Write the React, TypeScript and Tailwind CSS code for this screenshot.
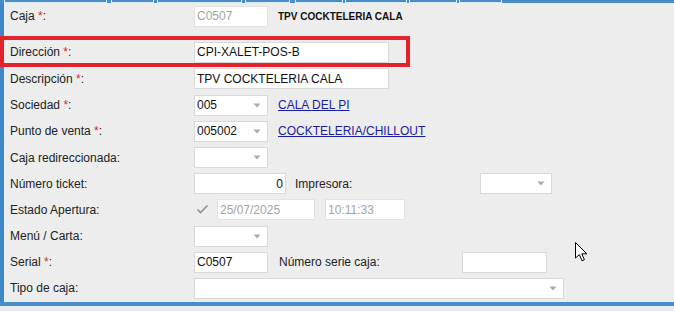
import React from 'react';

const tabs = [
  { w: 'w-[103px]', ml: 'ml-[4px]' },
  { w: 'w-[43px]', ml: 'ml-[4px]' },
  { w: 'w-[85px]', ml: 'ml-[3px]' },
  { w: 'w-[45px]', ml: 'ml-[3px]' },
  { w: 'w-[48px]', ml: 'ml-[5px]' },
  { w: 'w-[62px]', ml: 'ml-[2px]' },
  { w: 'w-[48px]', ml: 'ml-[2px]' },
  { w: 'w-[43px]', ml: 'ml-[2px]' },
];

function Label({ text, req, className = '' }: { text: string; req?: boolean; className?: string }) {
  return (
    <div className={`shrink-0 whitespace-nowrap ${className}`}>
      {text}
      {req && (
        <>
          {' '}
          <span className="text-[#d42a2a]">*</span>
        </>
      )}
      :
    </div>
  );
}

function Box({
  className,
  value,
  right,
  muted,
  arrow,
}: {
  className: string;
  value?: string;
  right?: boolean;
  muted?: boolean;
  arrow?: boolean;
}) {
  return (
    <div
      className={`h-[21px] shrink-0 bg-white border border-[#d9d9d9] flex items-center ${
        right ? 'justify-end pr-[2px]' : 'pl-[2px]'
      } ${muted ? 'text-[#a3a3a3]' : 'text-[#111]'} ${className}`}
    >
      {value && <span className={arrow ? 'flex-1' : ''}>{value}</span>}
      {arrow && (
        <div className="ml-auto pr-[6px] flex items-center">
          <svg width="8" height="5" viewBox="0 0 8 5">
            <path d="M0.5 0.5 L7.5 0.5 L4 4.5 Z" fill="#aaaaaa" />
          </svg>
        </div>
      )}
    </div>
  );
}

function Row({ h, children }: { h: string; children: React.ReactNode }) {
  return <div className={`flex items-center ${h}`}>{children}</div>;
}

export default function App() {
  return (
    <div className="relative w-[674px] h-[311px] overflow-hidden bg-[#ededed] text-[12px] text-[#222] font-[family-name:'Liberation_Sans',Arial,sans-serif]">
      {/* tab strip */}
      <div className="flex h-[3px] bg-[#4a8ec9]">
        {tabs.map((t, i) => (
          <div key={i} className={`h-[3px] ${t.w} ${t.ml} border-x border-b border-[#dcecf7]`} />
        ))}
      </div>

      <div className="flex">
        <div className="w-[4px] shrink-0 bg-[#3f87c6]" />
        <div className="flex-1 pl-[6px] pb-[1px]">
          <Row h="h-[26px]">
            <Label text="Caja" req className="w-[184px]" />
            <Box className="w-[74px] border-[#e2e2e2]" value="C0507" muted />
            <div className="ml-[10px] text-[10px] font-bold text-[#111]">TPV COCKTELERIA CALA</div>
          </Row>

          <div className="mt-[10px]">
            <Row h="h-[26px]">
              <Label text="Dirección" req className="w-[184px]" />
              <Box className="w-[195px]" value="CPI-XALET-POS-B" />
            </Row>
          </div>

          <Row h="h-[27px]">
            <Label text="Descripción" req className="w-[184px]" />
            <Box className="w-[195px]" value="TPV COCKTELERIA CALA" />
          </Row>

          <Row h="h-[26px]">
            <Label text="Sociedad" req className="w-[184px]" />
            <Box className="w-[74px]" value="005" arrow />
            <a className="ml-[10px] text-[#1c1ca0] underline">CALA DEL PI</a>
          </Row>

          <Row h="h-[26px]">
            <Label text="Punto de venta" req className="w-[184px]" />
            <Box className="w-[74px]" value="005002" arrow />
            <a className="ml-[10px] text-[#1c1ca0] underline">COCKTELERIA/CHILLOUT</a>
          </Row>

          <Row h="h-[27px]">
            <Label text="Caja redireccionada" className="w-[184px]" />
            <Box className="w-[74px]" arrow />
          </Row>

          <Row h="h-[25px]">
            <Label text="Número ticket" className="w-[184px]" />
            <Box className="w-[92px]" value="0" right />
            <Label text="Impresora" className="ml-[9px] w-[185px]" />
            <Box className="w-[72px]" arrow />
          </Row>

          <Row h="h-[27px]">
            <Label text="Estado Apertura" className="w-[184px]" />
            <div className="w-[23px] shrink-0 flex items-center pl-[2px]">
              <svg width="13" height="11" viewBox="0 0 13 11">
                <path d="M1.5 5.5 L4.5 8.5 L11.5 1.5" fill="none" stroke="#8f8f8f" strokeWidth="1.6" />
              </svg>
            </div>
            <Box className="w-[98px] border-[#e2e2e2]" value="25/07/2025" muted />
            <Box className="ml-[10px] w-[80px] border-[#e2e2e2]" value="10:11:33" muted />
          </Row>

          <Row h="h-[26px]">
            <Label text="Menú / Carta" className="w-[184px]" />
            <Box className="w-[74px]" arrow />
          </Row>

          <Row h="h-[26px]">
            <Label text="Serial" req className="w-[184px]" />
            <Box className="w-[74px]" value="C0507" />
            <Label text="Número serie caja" className="ml-[11px] w-[183px]" />
            <Box className="w-[85px]" />
          </Row>

          <Row h="h-[26px]">
            <Label text="Tipo de caja" className="w-[184px]" />
            <Box className="w-[370px]" arrow />
          </Row>
        </div>
      </div>

      <div className="h-[4px] bg-[#4a8ec9]" />
      <div className="h-[6px] bg-[#e6edf4]" />

      {/* annotation frame */}
      <div className="absolute left-0 top-[36px] w-[410px] h-[31px] border-[4px] border-[#e3222b]" />

      {/* mouse pointer */}
      <svg className="absolute left-[575px] top-[242px]" width="14" height="21" viewBox="0 0 14 21">
        <path
          d="M0.5 0.5 L0.5 16 L4.3 12.6 L7 18.8 L9.4 17.8 L6.8 11.8 L11.8 11.8 Z"
          fill="#ffffff"
          stroke="#000000"
          strokeWidth="1"
          strokeLinejoin="round"
        />
      </svg>
    </div>
  );
}
